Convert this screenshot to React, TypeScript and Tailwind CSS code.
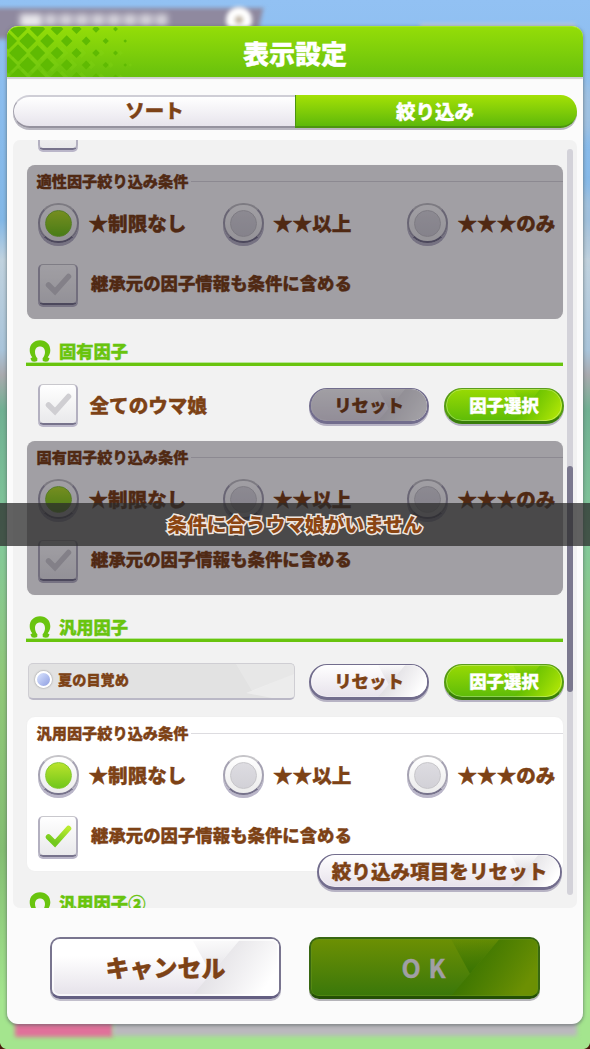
import clsx from "clsx";
import { useId, useState } from "react";
import type { ReactNode } from "react";

const STRENGTHS = ["★制限なし", "★★以上", "★★★のみ"];

function HeaderPattern() {
  const diamonds: { x: number; y: number; r: number }[] = [];
  for (let row = 0; row < 6; row++) {
    for (let col = 0; col < 7; col++) {
      const x = (row % 2 === 0 ? -8.5 : 1.2) + col * 19.5;
      const y = 2 + row * 12;
      const r = Math.min(8.8, 8.3 - (x - 21) * 0.067);
      if (r > 1) diamonds.push({ x, y, r });
    }
  }

  return (
    <svg className="absolute top-0 left-0" width="130" height="50" viewBox="0 0 130 50">
      {diamonds.map(({ x, y, r }) => (
        <g key={`${x}-${y}`}>
          {y > 20 && (
            <path
              d={`M${x + 5} ${y - r}l${r} ${r}l${-r} ${r}l${-r} ${-r}z`}
              fill="#8edb1c"
              opacity={0.2}
            />
          )}
          <path d={`M${x} ${y - r}l${r} ${r}l${-r} ${r}l${-r} ${-r}z`} fill="#5fba02" />
        </g>
      ))}
    </svg>
  );
}

/* Faceted highlight that sits against the right end of every button */
function Sheen({ color, glow }: { color: string; glow: string }) {
  const id = useId();
  return (
    <svg className="absolute top-0 right-0 h-full w-auto" viewBox="0 0 92 60">
      <defs>
        <linearGradient id={`${id}a`} x1="0.3" y1="0" x2="0.4" y2="1">
          <stop offset="0" stopColor={color} stopOpacity="0.1" />
          <stop offset="1" stopColor={color} stopOpacity="0.75" />
        </linearGradient>
        <linearGradient id={`${id}b`} x1="0.15" y1="0.25" x2="0.95" y2="0.6">
          <stop offset="0" stopColor={color} stopOpacity="0.85" />
          <stop offset="1" stopColor={glow} />
        </linearGradient>
      </defs>
      <path d="M0 0H51L20 36.5z" fill={`url(#${id}a)`} />
      <path d="M51 0H92V60H0z" fill={`url(#${id}b)`} />
    </svg>
  );
}

function HorseshoeIcon() {
  return (
    <svg className="shrink-0" width="22" height="22" viewBox="0 0 22 22">
      <path
        d="M2.800 21.300L1.400 18.600L3.300 17.300C1.600 15.400 .7 12.900 .7 10.300C.7 4.500 4.700 .2 11 .2S21.300 4.500 21.300 10.300C21.300 12.900 20.400 15.400 18.700 17.300L20.600 18.600L19.200 21.300C17.300 22 15.300 21.700 13.800 21L13.600 18.300C15.200 16.500 16 14.300 16 12C16 8.700 14.100 6.500 11 6.500S6 8.700 6 12C6 14.300 6.800 16.500 8.400 18.300L8.200 21C6.700 21.700 4.700 22 2.800 21.300z"
        fill="#69c40e"
      />
    </svg>
  );
}

function SectionTitle({ children }: { children: ReactNode }) {
  return (
    <div className="flex h-[46px] shrink-0 flex-col justify-end">
      <div className="flex h-[24px] items-center gap-[8px] pt-[2px] pl-[3px]">
        <HorseshoeIcon />
        <h2 className="text-[17.3px] leading-[22px] font-black text-[#69c40e]">{children}</h2>
      </div>
      <div className="h-[4px] w-[537px] shrink-0 border-t border-[#b8e59a] bg-[#69c40e]" />
    </div>
  );
}

function Checkbox({ checked = false }: { checked?: boolean }) {
  const id = useId();
  return (
    <span className="flex h-[41px] w-[40px] shrink-0 items-center justify-center rounded-[5px] border-x-2 border-t border-b-2 border-x-[#b3b0c0] border-t-[#c9c8cd] border-b-[#77738c] bg-linear-to-b from-white to-[#e9e9eb] shadow-[0_2px_0_#bab6c9]">
      <svg width="27" height="24" viewBox="0 0 27 24">
        <defs>
          <linearGradient id={id} x1="1" y1="0" x2="0.5" y2="1">
            <stop offset="0" stopColor="#b9eb2f" />
            <stop offset="1" stopColor="#72c91d" />
          </linearGradient>
        </defs>
        <path
          d="M3.500 13L10 19.500L23.500 4.500"
          fill="none"
          stroke={checked ? `url(#${id})` : "#cfced2"}
          strokeWidth="5.500"
          strokeLinecap="round"
        />
      </svg>
    </span>
  );
}

function Radio({ selected }: { selected: boolean }) {
  return (
    <span className="flex h-[40px] w-[41px] shrink-0 items-center justify-center rounded-full border-2 border-x-[#a5a2b2] border-t-[#c6c5c9] border-b-[#77738c] bg-linear-to-b from-white to-[#ececec] shadow-[0_3px_0_#bab6c9]">
      <span
        className={clsx(
          "h-[27px] w-[27px] rounded-full border",
          selected
            ? "border-[#85c832] bg-linear-to-b from-[#b9e32b] to-[#70c71b]"
            : "border-[#c6c5c9] bg-linear-to-b from-[#dddce1] to-[#d2d1d7]",
        )}
      />
    </span>
  );
}

function PillButton({
  children,
  variant = "white",
  disabled = false,
  className = "w-[120px] text-[17.4px]",
}: {
  children: ReactNode;
  variant?: "white" | "green";
  disabled?: boolean;
  className?: string;
}) {
  return (
    <button
      type="button"
      disabled={disabled}
      className={clsx(
        "relative block h-[36px] shrink-0 overflow-hidden rounded-full border-x-2 border-t border-b-[3px] font-black",
        variant === "green"
          ? "border-x-[#549a13] border-t-[#5b9d1c] border-b-[#397d0b] bg-linear-to-b from-[#98da03] to-[#5dbc08] text-white"
          : "border-[#726d8d] bg-linear-to-b from-white to-[#e7e2eb] text-[#7d4216]",
        className,
      )}
    >
      {variant === "green" ? (
        <Sheen color="#50b400" glow="#a8e205" />
      ) : (
        <Sheen color="#d9d7dc" glow="#ffffff" />
      )}
      <span className="absolute inset-0 rounded-full border border-white/30" />
      <span className="relative flex h-full items-center justify-center leading-none">
        {children}
      </span>
      {disabled && <span className="absolute -inset-1 bg-[#080310]/38" />}
    </button>
  );
}

function ConditionGroup({
  title,
  locked = false,
  checked = false,
}: {
  title: string;
  locked?: boolean;
  checked?: boolean;
}) {
  const [selected, setSelected] = useState(0);

  return (
    <section className="relative h-[156px] w-[538px] shrink-0 overflow-hidden rounded-[9px] border border-[#f0f0f0] bg-white text-[#7d4216]">
      <div className="flex h-[33px] items-center gap-[3px] pl-[9.5px]">
        <h3 className="pb-[3px] text-[15.2px] leading-[20px] font-black">{title}</h3>
        <div className="h-px flex-1 bg-[#dddce0]" />
      </div>
      <div className="mt-[5px] grid h-[44px] grid-cols-[184.5px_184.5px_auto] pl-[11px]">
        {STRENGTHS.map((label, index) => (
          <button
            key={label}
            type="button"
            onClick={() => setSelected(index)}
            className="flex items-start gap-[9.5px]"
          >
            <Radio selected={selected === index} />
            <span className="pt-[6px] text-[19.6px] leading-[28px] font-black whitespace-nowrap">
              {label}
            </span>
          </button>
        ))}
      </div>
      <div className="mt-[17px] flex items-start gap-[13px] pl-[11px]">
        <Checkbox checked={checked} />
        <span className="pt-[5px] text-[17.4px] leading-[28px] font-black">
          継承元の因子情報も条件に含める
        </span>
      </div>
      {locked && (
        <div className="absolute -inset-px rounded-[9px] border border-black/15 border-b-black/25 bg-[#080310]/38" />
      )}
    </section>
  );
}

function FactorRow({ children, empty = false }: { children: ReactNode; empty?: boolean }) {
  return (
    <div className="flex h-[74px] shrink-0 items-start justify-between">
      <div className="flex w-[283px]">{children}</div>
      <div className="flex gap-[15px] pt-[22px]">
        <div className="rounded-full shadow-[0_2px_0_#b7b3c4]">
          <PillButton disabled={empty}>リセット</PillButton>
        </div>
        <div className="rounded-full shadow-[0_2px_0_#b7b3c4]">
          <PillButton variant="green">因子選択</PillButton>
        </div>
      </div>
    </div>
  );
}

function FactorTag({ name }: { name: string }) {
  return (
    <div className="relative mt-[21px] ml-[2px] flex h-[37px] w-[267px] items-center gap-[6px] overflow-hidden rounded-[5px] border border-b-2 border-[#cfced3] border-b-[#bab8c6] bg-[#e2e2e2] pb-[3px] pl-[6px]">
      <svg className="absolute top-0 right-0" width="60" height="34" viewBox="0 0 60 34">
        <path d="M2 0H60V10L18 27z" fill="#fff" opacity=".2" />
        <path d="M60 10V34H38L12 29z" fill="#fff" opacity=".35" />
      </svg>
      <span className="h-[17px] w-[17px] rounded-full border-2 border-white bg-linear-to-br from-[#dce6ff] to-[#8f9ee0] shadow-[0_0_2px_#777]" />
      <span className="text-[14.2px] leading-none font-black text-[#7d4216]">{name}</span>
    </div>
  );
}

function Backdrop() {
  return (
    <div className="absolute inset-0 overflow-hidden bg-[#a4e58e]">
      <div className="absolute inset-0 bg-[linear-gradient(180deg,#92c1f3_0px,#82b7e6_220px,#c0d2de_260px,#a9c4da_350px,#a9aaae_375px,#70b092_410px,#83c99a_540px,#90c878_680px,#83bd72_850px,#a4e58e_1000px)]" />
      <div className="absolute top-[85px] right-0 h-[50px] w-[10px] bg-[#b9c7d4] blur-sm" />
      <div className="absolute top-[192px] right-0 h-[60px] w-[10px] bg-[#c4cbd0] blur-sm" />
      <div className="absolute top-[8px] -left-2 h-[31px] w-[268px] -skew-x-12 bg-[#8f899f] blur-[2px]" />
      <div className="absolute top-[14px] left-[20px] flex gap-[3px] blur-[3px]">
        <span className="h-[14px] w-[22px] bg-white/80" />
        <span className="h-[12px] w-[123px] bg-[repeating-linear-gradient(90deg,#ffffffa0_0_10px,#ffffff50_10px_16px)]" />
      </div>
      <div className="absolute top-[7px] left-[226px] h-[26px] w-[26px] rounded-full border-[9px] border-white bg-[#c2b6a5] blur-[2px]" />
      <div className="absolute top-[24px] left-[420px] h-[20px] w-[155px] bg-[#c7ccd4] blur-[2px]" />
      <div className="absolute bottom-[12px] left-[15px] h-[24px] w-[98px] bg-[#e0719a] blur-[2px]" />
      <div className="absolute right-[13px] bottom-[13px] left-[113px] h-[24px] bg-[#bab8bd] blur-[2px]" />
      <svg className="absolute bottom-0 left-0" width="6" height="6" viewBox="0 0 6 6">
        <path d="M0 0Q1 5 6 6H0z" fill="#4b1a0c" />
      </svg>
      <svg className="absolute right-0 bottom-0" width="6" height="6" viewBox="0 0 6 6">
        <path d="M6 0Q5 5 0 6H6z" fill="#4b1a0c" />
      </svg>
    </div>
  );
}

export default function App() {
  const [tab, setTab] = useState<"sort" | "filter">("filter");

  return (
    <main className="relative h-[1049px] w-[590px] overflow-hidden px-[7px] pt-[26px] font-['Noto_Sans_CJK_JP','Noto_Sans_CJK_SC',sans-serif] [-webkit-text-stroke:0.35px]">
      <Backdrop />

      <div className="relative flex h-[998px] w-[576px] flex-col rounded-[11px] bg-[#fbfbfb] shadow-[0_1px_3px_1px_#55606080]">
        <header className="relative flex h-[51px] shrink-0 items-center justify-center overflow-hidden rounded-t-[11px] border-t border-[#a4e625] bg-linear-to-b from-[#94dd08] to-[#67c00c] shadow-[0_2px_1px_#cfcfd2]">
          <HeaderPattern />
          <h1 className="relative pt-px text-[26px] leading-[30px] font-black text-white">
            表示設定
          </h1>
        </header>

        <div className="mx-[6px] mt-[18px] grid h-[33px] shrink-0 grid-cols-2 rounded-full text-[19.5px] leading-none font-black shadow-[0_2px_0_#b9b7c1]">
          <button
            type="button"
            onClick={() => setTab("sort")}
            className={clsx(
              "rounded-l-full border-t-2 border-b-2 border-l pb-[3px]",
              tab === "sort"
                ? "border-[#4c9410] bg-linear-to-b from-[#a4e105] to-[#5db90a] text-white"
                : "border-t-[#cfced6] border-b-[#95929e] border-l-[#a4a2ae] bg-linear-to-b from-white to-[#e7e4ec] text-[#7d4216]",
            )}
          >
            ソート
          </button>
          <button
            type="button"
            onClick={() => setTab("filter")}
            className={clsx(
              "rounded-r-full border-b-2 border-l pr-[3px]",
              tab === "filter"
                ? "border-[#4c9410] bg-linear-to-b from-[#a4e105] to-[#5db90a] text-white"
                : "border-[#95929e] bg-linear-to-b from-white to-[#e7e4ec] text-[#7d4216]",
            )}
          >
            絞り込み
          </button>
        </div>

        <div className="relative mx-[6px] mt-[12px] h-[768px] shrink-0 overflow-hidden rounded-[7px] bg-[#f2f2f2]">
          <div className="flex h-full">
            <div className="flex w-[551px] flex-col pl-[13px]">
              <div className="-mt-[31px] mb-[14px] flex h-[41px] shrink-0 pl-[12px]">
                <Checkbox />
              </div>
              <ConditionGroup title="適性因子絞り込み条件" locked />

              <SectionTitle>固有因子</SectionTitle>
              <FactorRow empty>
                <div className="flex items-start gap-[11.5px] pt-[18px] pl-[12px]">
                  <Checkbox />
                  <span className="pt-[7px] text-[19.6px] leading-[28px] font-black text-[#7d4216]">
                    全てのウマ娘
                  </span>
                </div>
              </FactorRow>
              <ConditionGroup title="固有因子絞り込み条件" locked />

              <SectionTitle>汎用因子</SectionTitle>
              <FactorRow>
                <FactorTag name="夏の目覚め" />
              </FactorRow>
              <ConditionGroup title="汎用因子絞り込み条件" checked />

              <SectionTitle>汎用因子②</SectionTitle>
            </div>
            <div className="mt-[9px] ml-[3px] h-[746px] w-[6px] rounded-full bg-[#d3d2d9] pt-[317px]">
              <div className="h-[226px] rounded-full bg-[#7b788e]" />
            </div>
          </div>

          <div className="absolute right-[15px] bottom-[18px] rounded-full shadow-[0_2px_0_#b7b3c4]">
            <PillButton className="w-[245px] text-[19.6px]">絞り込み項目をリセット</PillButton>
          </div>
        </div>

        <footer className="flex justify-between px-[43px] pt-[29px]">
          <button
            type="button"
            className="relative h-[62px] w-[231px] overflow-hidden rounded-[10px] border-2 border-b-[3px] border-[#79758f] border-b-[#645f82] bg-linear-to-b from-white from-30% to-[#e5e1e9] text-[24px] leading-none font-black text-[#7d4216] shadow-[0_2px_0_#c2bfcc]"
          >
            <Sheen color="#dcdadf" glow="#ffffff" />
            <span className="absolute inset-0 rounded-[7px] border-2 border-white/70" />
            <span className="relative block pb-px">キャンセル</span>
          </button>
          <button
            type="button"
            disabled
            className="relative h-[62px] w-[231px] overflow-hidden rounded-[10px] border-2 border-b-[3px] border-[#386711] border-b-[#244f06] bg-linear-to-b from-[#6c9003] to-[#39770a] text-[25px] leading-none font-bold text-[#a19fa4] shadow-[0_2px_0_#b5b4b9]"
          >
            <Sheen color="#337000" glow="#6c9003" />
            <span className="absolute inset-0 rounded-[7px] border border-[#65961b]/50" />
            <span className="relative block pr-px pb-px tracking-[1px]">O K</span>
          </button>
        </footer>
      </div>

      <div className="absolute top-[503px] left-0 flex h-[43px] w-full items-center justify-center bg-[#2b2b2b]/74">
        <p className="pb-[2px] text-[19.7px] leading-none font-black text-[#8a4513] [-webkit-text-stroke:3px_#efe6df] [paint-order:stroke_fill]">
          条件に合うウマ娘がいません
        </p>
      </div>
    </main>
  );
}
